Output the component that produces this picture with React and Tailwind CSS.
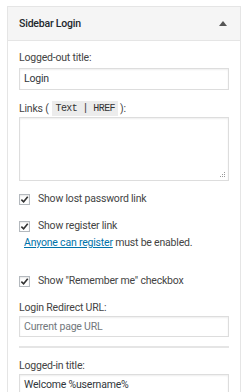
import React from 'react';

const Check = ({ label }) => (
  <label className="flex items-center gap-[8px] h-[16px] whitespace-nowrap">
    <span className="w-[11px] h-[11px] shrink-0 border border-[#b4b9be] bg-white flex items-center justify-center shadow-[inset_0_1px_2px_rgba(0,0,0,0.1)]">
      <svg width="9" height="9" viewBox="0 0 10 10">
        <path d="M1.5 5.2 L4 7.6 L8.6 2" fill="none" stroke="#333" strokeWidth="1.8" />
      </svg>
    </span>
    <span>{label}</span>
  </label>
);

const App = () => {
  return (
    <div className="w-[247px] h-[392px] bg-white overflow-hidden pt-[6px] pl-[7px] pr-[6px] text-[10.5px] tracking-[-0.2px] text-[#444]" style={{ fontFamily: 'Roboto, "Noto Sans", sans-serif' }}>
      <div className="border border-[#e5e5e5] h-[400px]">
        {/* Header */}
        <div className="h-[34px] bg-[#f5f5f5] border-b border-[#e5e5e5] flex items-center justify-between pl-[11px] pr-[13px]">
          <span className="text-[10.5px] font-medium text-[#23282d]">Sidebar Login</span>
          <svg width="8" height="5" viewBox="0 0 8 5"><path d="M0 5 L4 0 L8 5 Z" fill="#555" /></svg>
        </div>

        {/* Body */}
        <div className="px-[11px] pt-[9px] flex flex-col">
          <div className="leading-[16px]">Logged-out title:</div>
          <div className="mt-[2px] h-[22px] border border-[#ddd] flex items-center px-[4px] text-[#32373c] shadow-[inset_0_1px_2px_rgba(0,0,0,0.07)]">Login</div>

          <div className="mt-[11px] flex items-center h-[15px] whitespace-nowrap">
            <span>Links (</span>
            <span className="bg-[#ececec] ml-[3px] mr-[2px] pl-[4px] pr-[3px] h-[15px] flex items-center text-[10px] tracking-[-0.6px] text-[#333]" style={{ fontFamily: '"Liberation Mono", monospace' }}>
              Text | HREF
            </span>
            <span>):</span>
          </div>
          <div className="mt-[1px] h-[64px] border border-[#ddd] relative shadow-[inset_0_1px_2px_rgba(0,0,0,0.07)]">
            <svg className="absolute right-[2px] bottom-[2px]" width="6" height="6" viewBox="0 0 6 6">
              <rect x="4" y="0" width="1" height="1" fill="#999" />
              <rect x="2" y="2" width="1" height="1" fill="#999" />
              <rect x="4" y="2" width="1" height="1" fill="#999" />
              <rect x="0" y="4" width="1" height="1" fill="#999" />
              <rect x="2" y="4" width="1" height="1" fill="#999" />
              <rect x="4" y="4" width="1" height="1" fill="#999" />
            </svg>
          </div>

          <div className="mt-[10px]"><Check label="Show lost password link" /></div>
          <div className="mt-[11px]"><Check label="Show register link" /></div>
          <div className="mt-[1px] pl-[5px] leading-[16px] whitespace-nowrap">
            <span className="text-[#0073aa] underline">Anyone can register</span> must be enabled.
          </div>

          <div className="mt-[22px]"><Check label='Show "Remember me" checkbox' /></div>

          <div className="mt-[11px] leading-[16px]">Login Redirect URL:</div>
          <div className="h-[21px] border border-[#ddd] flex items-center px-[4px] text-[#72777c] shadow-[inset_0_1px_2px_rgba(0,0,0,0.07)]">Current page URL</div>

          <div className="mt-[9px] h-[2px] bg-[#e5e5e5]" />

          <div className="mt-[10px] leading-[16px]">Logged-in title:</div>
          <div className="h-[22px] border border-[#ddd] flex items-center px-[4px] text-[#32373c] shadow-[inset_0_1px_2px_rgba(0,0,0,0.07)]">Welcome %username%</div>
        </div>
      </div>
    </div>
  );
};

export default App;
